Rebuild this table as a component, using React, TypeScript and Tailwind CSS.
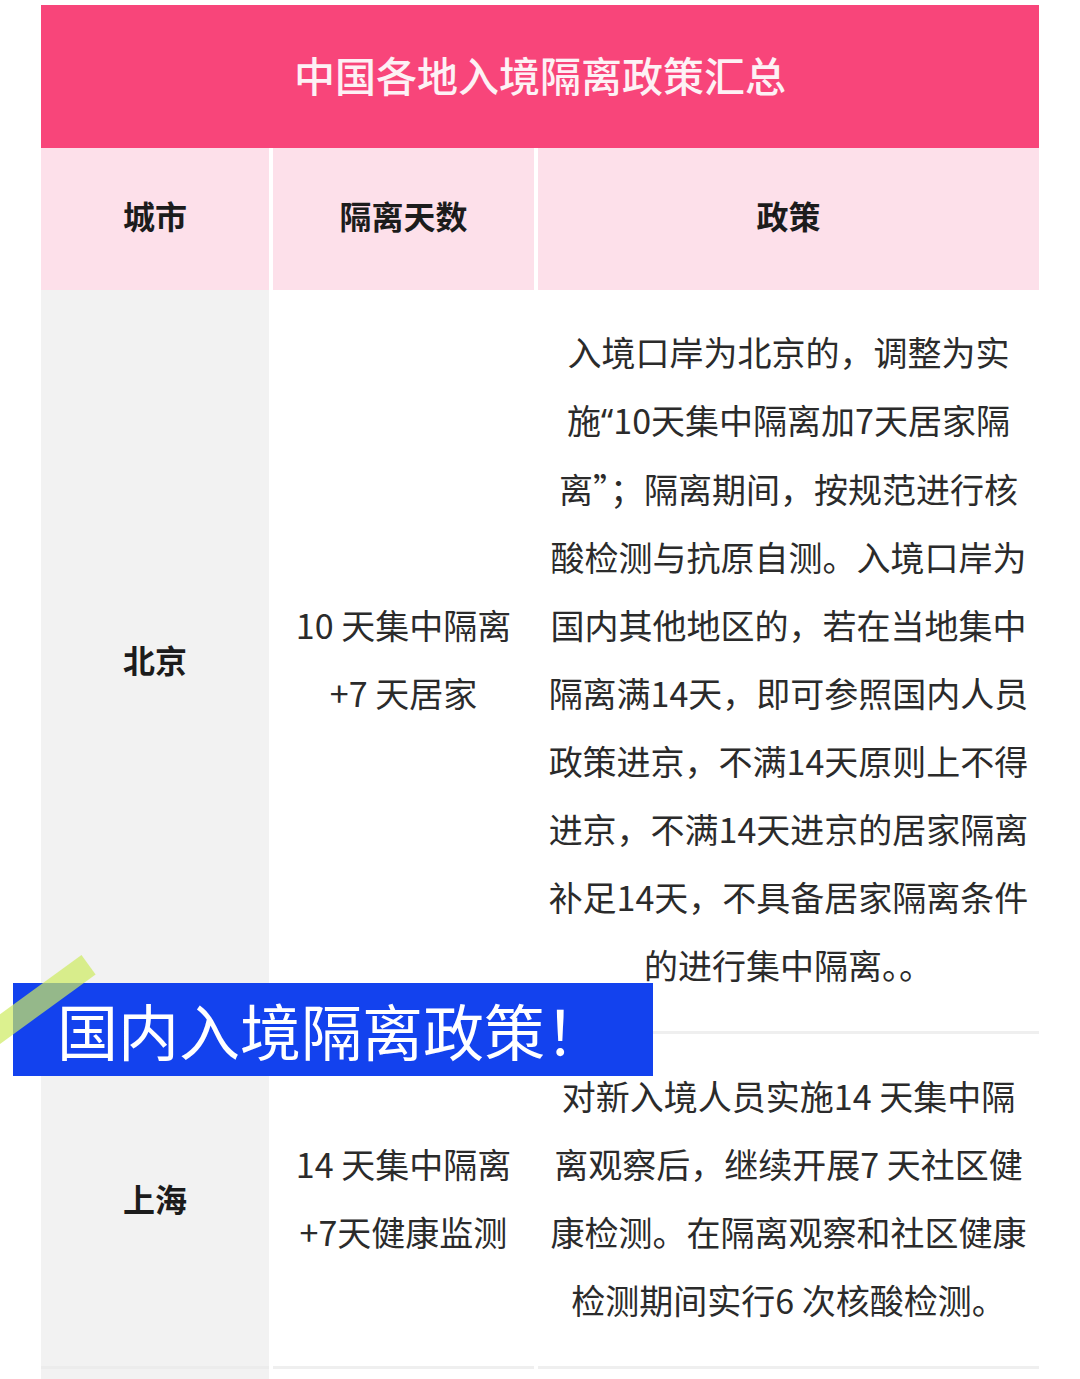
import type { ReactNode } from "react";

const beijingPolicy: ReactNode[] = [
  "入境口岸为北京的，调整为实",
  <>
    施<span className="font-['Noto_Sans']">“</span>10天集中隔离加7天居家隔
  </>,
  "离”；隔离期间，按规范进行核",
  "酸检测与抗原自测。入境口岸为",
  "国内其他地区的，若在当地集中",
  "隔离满14天，即可参照国内人员",
  "政策进京，不满14天原则上不得",
  "进京，不满14天进京的居家隔离",
  "补足14天，不具备居家隔离条件",
  "的进行集中隔离。。",
];

const shanghaiPolicy: ReactNode[] = [
  "对新入境人员实施14 天集中隔",
  "离观察后，继续开展7 天社区健",
  "康检测。在隔离观察和社区健康",
  "检测期间实行6 次核酸检测。",
];

const rows = [
  { city: "北京", days: ["10 天集中隔离", "+7 天居家"], policy: beijingPolicy },
  { city: "上海", days: ["14 天集中隔离", "+7天健康监测"], policy: shanghaiPolicy },
];

function Lines({ lines }: { lines: ReactNode[] }) {
  return (
    <div className="text-center">
      {lines.map((l, i) => (
        <div key={i} className="whitespace-nowrap">
          {l}
        </div>
      ))}
    </div>
  );
}

export default function App() {
  return (
    <div
      className="relative min-h-[1379px] overflow-hidden bg-white"
      style={{ fontFamily: '"Noto Sans CJK SC", "Noto Sans", sans-serif' }}
    >
      <div className="ml-[41px] mt-[5px] w-[998px]">
        <div className="flex h-[143px] items-center justify-center bg-[#f8457a] pb-1 text-[41px] font-medium text-[#fdf1f5]">
          中国各地入境隔离政策汇总
        </div>

        <div className="grid grid-cols-[228px_261px_1fr] gap-x-1">
          {["城市", "隔离天数", "政策"].map((h) => (
            <div
              key={h}
              className="flex h-[142px] items-center justify-center bg-[#fde0ea] pb-2 text-[32px] font-bold text-[#1c1c1c]"
            >
              {h}
            </div>
          ))}
        </div>

        {rows.map((r) => (
          <div key={r.city} className="grid grid-cols-[228px_261px_1fr] gap-x-1 text-[34px] leading-[68px] text-[#2b2b2b]">
            <div className="flex items-center justify-center border-b-[3px] border-[#ececec] bg-[#f2f2f2] pb-1 text-[32px] font-bold text-[#1c1c1c]">
              {r.city}
            </div>
            <div className="flex items-center justify-center border-b-[3px] border-[#efefef] pb-1">
              <Lines lines={r.days} />
            </div>
            <div className="flex items-center justify-center border-b-[3px] border-[#efefef] pb-[32px] pt-[28px]">
              <Lines lines={r.policy} />
            </div>
          </div>
        ))}

        <div className="grid h-[20px] grid-cols-[228px_261px_1fr] gap-x-1">
          <div className="bg-[#f2f2f2]" />
        </div>
      </div>

      <div className="absolute left-[13px] top-[983px] flex h-[93px] w-[640px] items-center bg-[#1342ee] pl-[44px] text-[61px] font-normal leading-none text-white">
        国内入境隔离政策！
      </div>
      <div className="absolute left-[-20px] top-[988px] h-[24px] w-[120px] -rotate-[36deg] bg-[rgba(205,235,95,0.7)]" />
    </div>
  );
}
